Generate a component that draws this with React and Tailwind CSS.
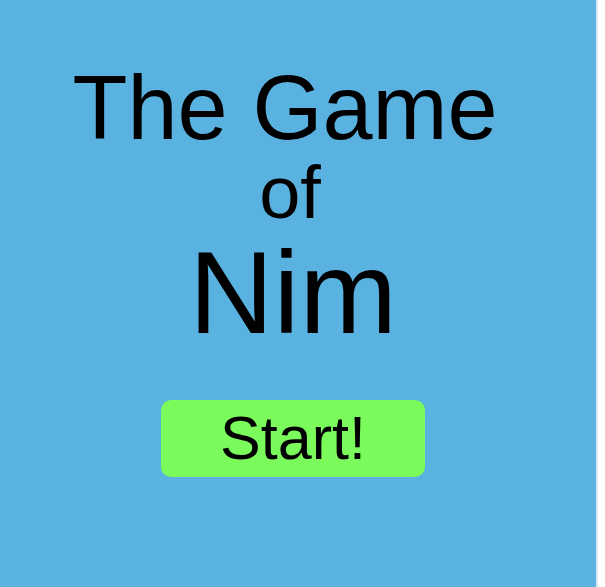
export default function App() {
  return (
    <div className="flex min-h-[587px] w-[605px] bg-white" style={{ fontFamily: '"Liberation Sans", Arial, sans-serif' }}>
      <div className="flex h-[587px] w-[598px] flex-col items-center border-r-2 border-[#d9e8f0] bg-[#5ab2e1] pr-[10px] pt-[63px] text-black">
        <h1 className="mr-[16px] text-[90px] leading-none font-normal">The Game</h1>
        <h2 className="mr-[6px] mt-[3px] text-[74px] leading-none font-normal">of</h2>
        <h1 className="mt-[4px] text-[117px] leading-none font-normal">Nim</h1>
        <button className="mt-[49px] flex h-[77px] w-[264px] items-center justify-center rounded-[10px] bg-[#7bfa5c] text-[61px] leading-none">
          Start!
        </button>
      </div>
    </div>
  );
}
